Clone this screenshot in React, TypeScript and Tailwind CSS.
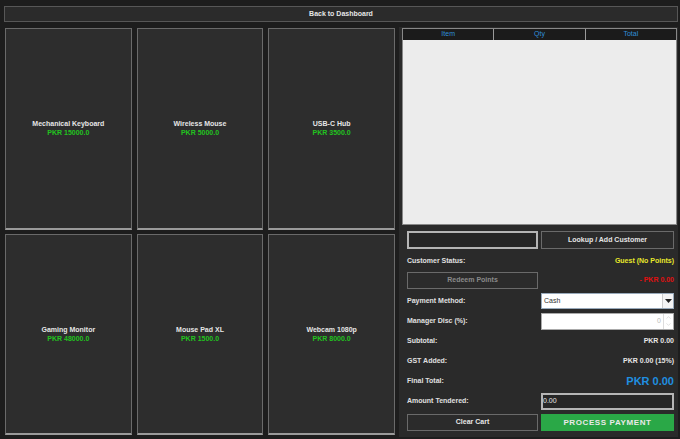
import { ChevronDown, ChevronUp } from "lucide-react";

type Product = { name: string; price: string };

const products: Product[] = [
  { name: "Mechanical Keyboard", price: "PKR 15000.0" },
  { name: "Wireless Mouse", price: "PKR 5000.0" },
  { name: "USB-C Hub", price: "PKR 3500.0" },
  { name: "Gaming Monitor", price: "PKR 48000.0" },
  { name: "Mouse Pad XL", price: "PKR 1500.0" },
  { name: "Webcam 1080p", price: "PKR 8000.0" },
];

function ProductCard({ product }: { product: Product }) {
  return (
    <div className="flex flex-col items-center justify-center bg-[#2d2d2d] border border-[#6a6a6a] border-b-2 border-b-[#9a9a9a] leading-[9px]">
      <div className="text-[7px] font-bold text-[#e6e6e6]">{product.name}</div>
      <div className="text-[7px] font-bold text-[#22c31f]">{product.price}</div>
    </div>
  );
}

function Row({ label, children }: { label: string; children: React.ReactNode }) {
  return (
    <div className="flex items-center justify-between h-[20px]">
      <span className="text-[7px] font-bold text-[#e0e0e0]">{label}</span>
      {children}
    </div>
  );
}

export default function App() {
  return (
    <div
      className="w-[680px] h-[439px] bg-[#1d1d1d] flex flex-col pl-[4px] pr-[2px] pt-[6px] pb-[2px] overflow-hidden"
      style={{ fontFamily: '"Liberation Sans", Arial, sans-serif' }}
    >
      {/* Top bar */}
      <button className="h-[16px] w-full bg-[#2b2b2b] border border-[#575757] text-[7px] font-bold text-[#e6e6e6] flex items-center justify-center">
        Back to Dashboard
      </button>

      <div className="flex flex-1 mt-[5px] gap-[3px]">
        {/* Product grid */}
        <div className="w-[392px] grid grid-cols-3 grid-rows-2 gap-x-[5px] gap-y-[4px] p-[1px] pb-[2px]">
          {products.map((p) => (
            <ProductCard key={p.name} product={p} />
          ))}
        </div>

        {/* Cart / checkout */}
        <div className="flex-1 bg-[#2a2a2a] flex flex-col pl-[3px] pr-[1px] pt-[1px]">
          <div className="h-[197px] bg-[#ececec] border border-[#888] flex flex-col">
            <div className="grid grid-cols-3 h-[11px] gap-[1px] bg-[#9a9a9a]">
              {["Item", "Qty", "Total"].map((h) => (
                <div key={h} className="bg-[#1b1b1b] text-[7px] text-[#2f8fd8] flex items-center justify-center">
                  {h}
                </div>
              ))}
            </div>
          </div>

          <div className="flex flex-col pl-[5px] pr-[3px] mt-[6px]">
            <div className="flex gap-[3px] h-[18px]">
              <div className="w-[131px] bg-[#262626] border-2 border-[#b5b5b5]" />
              <button className="flex-1 bg-[#2b2b2b] border border-[#6a6a6a] text-[7px] font-bold text-[#e6e6e6]">
                Lookup / Add Customer
              </button>
            </div>

            <div className="mt-[2px]">
              <Row label="Customer Status:">
                <span className="text-[7px] font-bold text-[#e8e82a]">Guest (No Points)</span>
              </Row>
            </div>

            <div className="flex items-center justify-between h-[17px] mt-[1px]">
              <button className="w-[131px] h-full bg-[#2b2b2b] border border-[#6a6a6a] text-[7px] font-bold text-[#8a8a8a]">
                Redeem Points
              </button>
              <span className="text-[7px] font-bold text-[#e01010]">- PKR 0.00</span>
            </div>

            <div className="mt-[2px]">
              <Row label="Payment Method:">
                <div className="w-[133px] h-[16px] bg-white border border-[#9ab] flex items-center">
                  <span className="flex-1 text-[7px] text-[#333] pl-[2px]">Cash</span>
                  <div className="w-[11px] h-full bg-[#f4f4f4] border-l border-[#ccc] flex items-center justify-center">
                    <svg width="7" height="4" viewBox="0 0 7 4">
                      <path d="M0 0 L7 0 L3.5 4 Z" fill="#222" />
                    </svg>
                  </div>
                </div>
              </Row>
              <Row label="Manager Disc (%):">
                <div className="w-[133px] h-[17px] bg-white border border-[#aaa] flex items-center">
                  <span className="flex-1 text-right text-[7px] text-[#bbb] pr-[2px]">0</span>
                  <div className="w-[10px] h-full border-l border-[#ddd] flex flex-col items-center">
                    <ChevronUp className="w-[7px] h-[7px] text-[#ccc]" />
                    <ChevronDown className="w-[7px] h-[7px] text-[#ccc]" />
                  </div>
                </div>
              </Row>
              <Row label="Subtotal:">
                <span className="text-[7px] font-bold text-[#e6e6e6]">PKR 0.00</span>
              </Row>
              <Row label="GST Added:">
                <span className="text-[7px] font-bold text-[#e6e6e6]">PKR 0.00 (15%)</span>
              </Row>
              <Row label="Final Total:">
                <span className="text-[11px] font-bold text-[#1f8fe0]">PKR 0.00</span>
              </Row>
              <Row label="Amount Tendered:">
                <div className="w-[133px] h-[17px] bg-[#262626] border-2 border-[#b5b5b5] flex items-center">
                  <span className="text-[7px] text-[#e6e6e6]">0.00</span>
                </div>
              </Row>
            </div>

            <div className="flex gap-[3px] h-[17px] mt-[3px]">
              <button className="w-[131px] bg-[#2b2b2b] border border-[#6a6a6a] text-[7px] font-bold text-[#e6e6e6]">
                Clear Cart
              </button>
              <button className="flex-1 bg-[#2aa847] text-[8px] font-bold tracking-[0.6px] text-[#eaeaea]">
                PROCESS PAYMENT
              </button>
            </div>
          </div>
        </div>
      </div>
    </div>
  );
}
